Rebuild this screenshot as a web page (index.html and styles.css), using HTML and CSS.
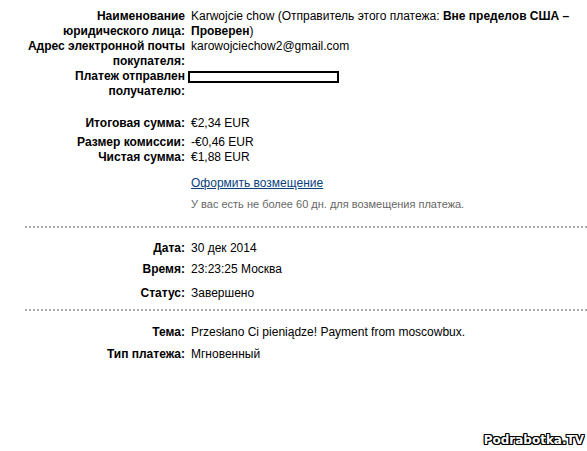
FILE: index.html
```html
<!DOCTYPE html>
<html lang="ru">
<head>
<meta charset="utf-8">
<title>Детали платежа</title>
<link rel="stylesheet" href="styles.css">
</head>
<body>
<div class="page">
  <div class="rows">
    <div class="row">
      <div class="lbl">Наименование юридического лица:</div>
      <div class="val">Karwojcie chow (Отправитель этого платежа: <b>Вне пределов США –</b> <b>Проверен</b>)</div>
    </div>
    <div class="row">
      <div class="lbl">Адрес электронной почты покупателя:</div>
      <div class="val">karowojciechow2@gmail.com</div>
    </div>
    <div class="row">
      <div class="lbl">Платеж отправлен получателю:</div>
      <div class="val"><span class="redact"></span></div>
    </div>
  </div>

  <div class="rows sums">
    <div class="row">
      <div class="lbl">Итоговая сумма:</div>
      <div class="val">€2,34 EUR</div>
    </div>
    <div class="row r-fee">
      <div class="lbl">Размер комиссии:</div>
      <div class="val">-€0,46 EUR</div>
    </div>
    <div class="row">
      <div class="lbl">Чистая сумма:</div>
      <div class="val">€1,88 EUR</div>
    </div>
    <div class="row r-link">
      <div class="lbl"></div>
      <div class="val"><a class="link" href="#">Оформить возмещение</a></div>
    </div>
    <div class="row r-note">
      <div class="lbl"></div>
      <div class="val note">У вас есть не более 60 дн. для возмещения платежа.</div>
    </div>
  </div>

  <div class="sep sep-1"></div>

  <div class="rows">
    <div class="row r-date">
      <div class="lbl">Дата:</div>
      <div class="val">30 дек 2014</div>
    </div>
    <div class="row r-time">
      <div class="lbl">Время:</div>
      <div class="val">23:23:25 Москва</div>
    </div>
    <div class="row r-status">
      <div class="lbl">Статус:</div>
      <div class="val">Завершено</div>
    </div>
  </div>

  <div class="sep sep-2"></div>

  <div class="rows">
    <div class="row r-subj">
      <div class="lbl">Тема:</div>
      <div class="val">Przesłano Ci pieniądze! Payment from moscowbux.</div>
    </div>
    <div class="row r-type">
      <div class="lbl">Тип платежа:</div>
      <div class="val">Мгновенный</div>
    </div>
  </div>
</div>
<div class="watermark">Podrabotka.TV</div>
</body>
</html>
```

FILE: styles.css
```css
html, body {
  margin: 0;
  padding: 0;
  background: #ffffff;
}
body {
  width: 587px;
  height: 451px;
  overflow: hidden;
  position: relative;
  font-family: "Liberation Sans", Arial, sans-serif;
  font-size: 12px;
  line-height: 15px;
  color: #000;
}
.page {
  padding-top: 9px;
}
.rows {
  display: flex;
  flex-direction: column;
}
.row {
  display: grid;
  grid-template-columns: 160px 385px;
  column-gap: 6px;
  padding-left: 25px;
}
.lbl {
  font-weight: bold;
  text-align: right;
}
.val b {
  font-weight: bold;
}
.redact {
  display: inline-block;
  box-sizing: border-box;
  width: 151px;
  height: 12px;
  border: 2px solid #000;
  margin-left: -3px;
  vertical-align: -3px;
  background: #fff;
}
.sums {
  margin-top: 17px;
}
.r-fee { margin-top: 4px; }
.r-link { margin-top: 11px; }
.link {
  color: #0a3f7d;
  text-decoration: underline;
}
.r-note { margin-top: 6px; }
.note {
  font-size: 11px;
  color: #666666;
}
.sep {
  height: 2px;
  margin-left: 25px;
  background: repeating-linear-gradient(to right, #ababab 0 2px, transparent 2px 4px);
}
.sep-1 { margin-top: 14px; }
.r-date { margin-top: 13px; }
.r-time { margin-top: 6px; }
.r-status { margin-top: 9px; }
.sep-2 { margin-top: 8px; }
.r-subj { margin-top: 14px; }
.r-type { margin-top: 7px; }
.watermark {
  position: absolute;
  right: 3px;
  bottom: 3px;
  font-family: "DejaVu Sans", sans-serif;
  font-weight: bold;
  font-size: 12px;
  line-height: 15px;
  color: #fff;
  text-shadow: 1px 0 0 #000, -1px 0 0 #000, 0 1px 0 #000, 0 -1px 0 #000,
               1px 1px 0 #000, -1px -1px 0 #000, 1px -1px 0 #000, -1px 1px 0 #000;
}
```
